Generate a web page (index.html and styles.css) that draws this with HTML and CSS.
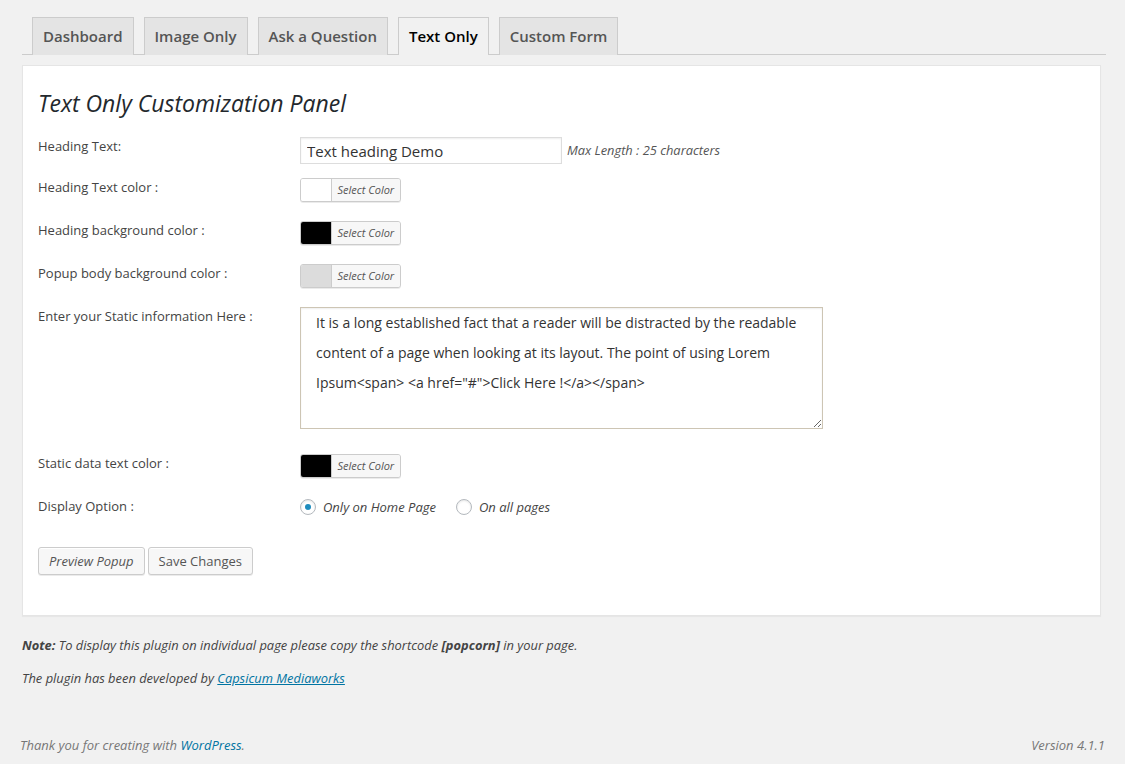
FILE: index.html
```html
<!DOCTYPE html>
<html>
<head>
<meta charset="utf-8">
<title>Text Only Customization Panel</title>
<link rel="stylesheet" href="styles.css">
</head>
<body>
<div class="page">
  <div class="wrap">
    <div class="tabs">
      <a class="tab" href="#">Dashboard</a>
      <a class="tab" href="#">Image Only</a>
      <a class="tab" href="#">Ask a Question</a>
      <a class="tab tab-active" href="#">Text Only</a>
      <a class="tab" href="#">Custom Form</a>
    </div>

    <div class="panel">
      <h2 class="panel-title">Text Only Customization Panel</h2>

      <div class="form">
        <div class="row row-input">
          <label class="lbl">Heading Text:</label>
          <div class="field">
            <input class="text-input" type="text" value="Text heading Demo">
            <span class="hint">Max Length : 25 characters</span>
          </div>
        </div>

        <div class="row">
          <label class="lbl">Heading Text color :</label>
          <div class="field">
            <span class="picker"><span class="swatch swatch-white"></span><span class="pick-label">Select Color</span></span>
          </div>
        </div>

        <div class="row">
          <label class="lbl">Heading background color :</label>
          <div class="field">
            <span class="picker"><span class="swatch swatch-black"></span><span class="pick-label">Select Color</span></span>
          </div>
        </div>

        <div class="row">
          <label class="lbl">Popup body background color :</label>
          <div class="field">
            <span class="picker"><span class="swatch swatch-gray"></span><span class="pick-label">Select Color</span></span>
          </div>
        </div>

        <div class="row row-textarea">
          <label class="lbl">Enter your Static information Here :</label>
          <div class="field">
            <textarea class="textarea">It is a long established fact that a reader will be distracted by the readable content of a page when looking at its layout. The point of using Lorem Ipsum&lt;span&gt; &lt;a href="#"&gt;Click Here !&lt;/a&gt;&lt;/span&gt;</textarea>
          </div>
        </div>

        <div class="row">
          <label class="lbl">Static data text color :</label>
          <div class="field">
            <span class="picker"><span class="swatch swatch-black"></span><span class="pick-label">Select Color</span></span>
          </div>
        </div>

        <div class="row row-radio">
          <label class="lbl">Display Option :</label>
          <div class="field radios">
            <label class="radio-opt"><input class="radio" type="radio" name="display" checked><span>Only on Home Page</span></label>
            <label class="radio-opt"><input class="radio" type="radio" name="display"><span>On all pages</span></label>
          </div>
        </div>
      </div>

      <div class="actions">
        <button class="button button-italic" type="button">Preview Popup</button>
        <button class="button" type="button">Save Changes</button>
      </div>
    </div>

    <p class="note"><strong>Note:</strong> To display this plugin on individual page please copy the shortcode <strong>[popcorn]</strong> in your page.</p>
    <p class="note">The plugin has been developed by <a class="link-u" href="#">Capsicum Mediaworks</a></p>
  </div>

  <footer class="footer">
    <p class="footer-left">Thank you for creating with <a class="link" href="#">WordPress</a>.</p>
    <p class="footer-right">Version 4.1.1</p>
  </footer>
</div>
</body>
</html>
```

FILE: styles.css
```css
* { box-sizing: border-box; }

html, body {
  margin: 0;
  padding: 0;
}

body {
  background: #f1f1f1;
  color: #444;
  font-family: "Open Sans", "Noto Sans", sans-serif;
  font-size: 13px;
  line-height: 1.4;
}

.page {
  min-height: 764px;
  display: flex;
  flex-direction: column;
}

.wrap {
  margin: 17px 19px 0 22px;
}

/* Tabs */
.tabs {
  display: flex;
  border-bottom: 1px solid #ccc;
  margin: 0;
  padding: 0;
}

.tab {
  display: block;
  margin: 0 0 -1px 10px;
  padding: 6px 10px 7px;
  border: 1px solid #ccc;
  border-bottom: none;
  background: #e4e4e4;
  color: #555;
  font-size: 15px;
  font-weight: 600;
  line-height: 24px;
  text-decoration: none;
}

.tab-active {
  background: #f1f1f1;
  color: #000;
}

/* Panel */
.panel {
  margin: 10px 5px 0 0;
  background: #fff;
  border: 1px solid #e5e5e5;
  box-shadow: 0 1px 1px rgba(0, 0, 0, 0.04);
  padding: 0 15px 40px;
}

.panel-title {
  margin: 23px 0 19px;
  font-size: 23px;
  font-weight: 400;
  font-style: italic;
  line-height: 29px;
  color: #23282d;
}

.form {
  display: flex;
  flex-direction: column;
}

.row {
  display: flex;
  align-items: flex-start;
  margin-bottom: 19px;
}

.row-input { margin-bottom: 14px; }
.row-textarea { margin-bottom: 25px; }
.row-radio { margin-bottom: 32px; }

.lbl {
  width: 262px;
  flex: none;
  line-height: 18px;
  font-size: 13px;
  color: #444;
}

.field {
  display: flex;
  align-items: center;
}

.text-input {
  width: 262px;
  height: 27px;
  padding: 3px 6px;
  border: 1px solid #ddd;
  box-shadow: inset 0 1px 2px rgba(0, 0, 0, 0.07);
  background: #fff;
  color: #333;
  font-family: "Open Sans", "Noto Sans", sans-serif;
  font-size: 15px;
  outline: none;
}

.hint {
  margin-left: 5px;
  padding-top: 1px;
  font-style: italic;
  color: #555;
  font-size: 12.85px;
}

/* Color picker */
.picker {
  display: flex;
  height: 24px;
  border: 1px solid #ccc;
  border-radius: 3px;
  background: #f7f7f7;
  box-shadow: 0 1px 0 rgba(0, 0, 0, 0.08);
  overflow: hidden;
}

.swatch {
  width: 30px;
  height: 100%;
}

.swatch-white { background: #fff; }
.swatch-black { background: #000; }
.swatch-gray { background: #dcdcdc; }

.pick-label {
  border-left: 1px solid #ccc;
  padding: 0 5.5px;
  font-size: 11px;
  font-style: italic;
  line-height: 22px;
  color: #555;
  background: #f7f7f7;
}

/* Textarea */
.textarea {
  width: 523px;
  height: 122px;
  padding: 0 15px;
  border: 1px solid #cdc5b4;
  box-shadow: inset 0 1px 2px rgba(0, 0, 0, 0.07);
  font-family: "Open Sans", "Noto Sans", sans-serif;
  font-size: 14px;
  line-height: 30px;
  color: #333;
  background: #fff;
  outline: none;
  resize: both;
}

/* Radios */
.radios {
  padding-top: 2px;
}

.radio-opt {
  display: flex;
  align-items: center;
  margin-right: 20px;
  font-style: italic;
  color: #444;
  line-height: 16px;
}

.radio {
  appearance: none;
  -webkit-appearance: none;
  width: 16px;
  height: 16px;
  margin: 0 7px 0 0;
  border: 1px solid #b4b9be;
  border-radius: 50%;
  background: #fff;
  box-shadow: inset 0 1px 2px rgba(0, 0, 0, 0.1);
  display: flex;
  align-items: center;
  justify-content: center;
}

.radio:checked::before {
  content: "";
  width: 6px;
  height: 6px;
  border-radius: 50%;
  background: #1e8cbe;
}

/* Buttons */
.actions {
  display: flex;
  gap: 3px;
}

.button {
  height: 28px;
  padding: 0 10px 1px;
  border: 1px solid #ccc;
  border-radius: 3px;
  background: #f7f7f7;
  box-shadow: inset 0 1px 0 #fff, 0 1px 0 rgba(0, 0, 0, 0.08);
  color: #555;
  font-family: "Open Sans", "Noto Sans", sans-serif;
  font-size: 13px;
  line-height: 26px;
  cursor: pointer;
}

.button-italic { font-style: italic; }

/* Notes */
.note {
  margin: 13px 0 0;
  font-style: italic;
  font-size: 12.9px;
  line-height: 19.5px;
  color: #444;
}

.panel + .note { margin-top: 20px; }

.note strong { font-weight: 700; }

.link-u {
  color: #0074a2;
  text-decoration: underline;
}

/* Footer */
.footer {
  margin-top: auto;
  display: flex;
  justify-content: space-between;
  padding: 10px 20px 9px;
}

.footer p {
  margin: 0;
  font-style: italic;
  line-height: 20px;
  color: #777;
}

.link {
  color: #0074a2;
  text-decoration: none;
}
```
